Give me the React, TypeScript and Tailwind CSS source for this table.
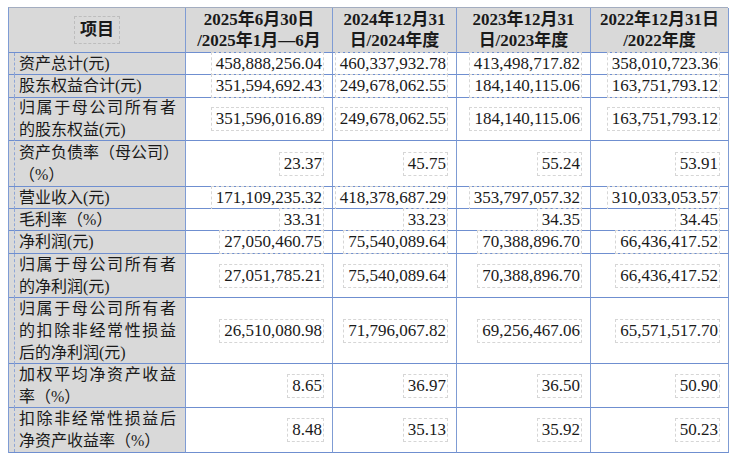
import React from "react";

type Line = { t: string; j?: boolean };

const rows: { label: Line[]; vals: string[] }[] = [
  { label: [{ t: "资产总计(元)" }], vals: ["458,888,256.04", "460,337,932.78", "413,498,717.82", "358,010,723.36"] },
  { label: [{ t: "股东权益合计(元)" }], vals: ["351,594,692.43", "249,678,062.55", "184,140,115.06", "163,751,793.12"] },
  { label: [{ t: "归属于母公司所有者", j: true }, { t: "的股东权益(元)" }], vals: ["351,596,016.89", "249,678,062.55", "184,140,115.06", "163,751,793.12"] },
  { label: [{ t: "资产负债率（母公司）", j: true }, { t: "（%）" }], vals: ["23.37", "45.75", "55.24", "53.91"] },
  { label: [{ t: "营业收入(元)" }], vals: ["171,109,235.32", "418,378,687.29", "353,797,057.32", "310,033,053.57"] },
  { label: [{ t: "毛利率（%）" }], vals: ["33.31", "33.23", "34.35", "34.45"] },
  { label: [{ t: "净利润(元)" }], vals: ["27,050,460.75", "75,540,089.64", "70,388,896.70", "66,436,417.52"] },
  { label: [{ t: "归属于母公司所有者", j: true }, { t: "的净利润(元)" }], vals: ["27,051,785.21", "75,540,089.64", "70,388,896.70", "66,436,417.52"] },
  { label: [{ t: "归属于母公司所有者", j: true }, { t: "的扣除非经常性损益", j: true }, { t: "后的净利润(元)" }], vals: ["26,510,080.98", "71,796,067.82", "69,256,467.06", "65,571,517.70"] },
  { label: [{ t: "加权平均净资产收益", j: true }, { t: "率（%）" }], vals: ["8.65", "36.97", "36.50", "50.90"] },
  { label: [{ t: "扣除非经常性损益后", j: true }, { t: "净资产收益率（%）" }], vals: ["8.48", "35.13", "35.92", "50.23"] },
];

const heads: string[][] = [
  ["2025年6月30日", "/2025年1月—6月"],
  ["2024年12月31", "日/2024年度"],
  ["2023年12月31", "日/2023年度"],
  ["2022年12月31日", "/2022年度"],
];

const font = { fontFamily: '"Liberation Serif", "Noto Sans CJK SC", serif' };

export default function App() {
  return (
    <div className="w-[750px] h-[462px] bg-white text-[#1a1a1a]" style={font}>
      <div className="pl-[8px] pt-[7px]">
        <div className="grid grid-cols-[177px_147px_124px_134px_138px] grid-rows-[45px_22px_23px_43px_46px_22px_22px_23px_44px_66px_44px_45px] w-[720px] border-t border-l border-t-[#a3adc0] border-l-[#7f9cd4]">
          <div className="bg-[#d9d9d9] border-r border-b border-r-[#7f9cd4] border-b-[#6f8fd0] flex items-center justify-center">
            <span className="border border-dashed border-[#bdbdbd] px-[5px] text-[17px] leading-[22px] font-bold py-[2px]">项目</span>
          </div>
          {heads.map((h, i) => (
            <div
              key={i}
              className="bg-[#d9d9d9] border-r border-b border-r-[#7f9cd4] border-b-[#6f8fd0] flex flex-col items-center justify-center text-[17px] leading-[21px] font-bold"
            >
              <div className="whitespace-nowrap">{h[0]}</div>
              <div className="whitespace-nowrap">{h[1]}</div>
            </div>
          ))}
          {rows.map((r, ri) => (
            <React.Fragment key={ri}>
              <div className="bg-[#d9d9d9] border-r border-b border-r-[#7f9cd4] border-b-[#6f8fd0] flex flex-col justify-center pl-[5px] pr-[9px] text-[16px] leading-[22px]">
                <div className="border-l border-dashed border-[#8fa6d6] pl-[4px]">
                  {r.label.map((l, li) => (
                    <div
                      key={li}
                      className={l.j ? "whitespace-nowrap text-justify [text-align-last:justify]" : "whitespace-nowrap"}
                    >
                      {l.t}
                    </div>
                  ))}
                </div>
              </div>
              {r.vals.map((v, vi) => (
                <div
                  key={vi}
                  className="bg-white border-r border-b border-r-[#7f9cd4] border-b-[#6f8fd0] flex items-center justify-end pr-[8px] text-[17px] leading-[20px]"
                >
                  <span className="border border-dashed border-[#d6d6d6] pl-[4px] pr-[1px] py-[1px] whitespace-nowrap">{v}</span>
                </div>
              ))}
            </React.Fragment>
          ))}
        </div>
      </div>
    </div>
  );
}
